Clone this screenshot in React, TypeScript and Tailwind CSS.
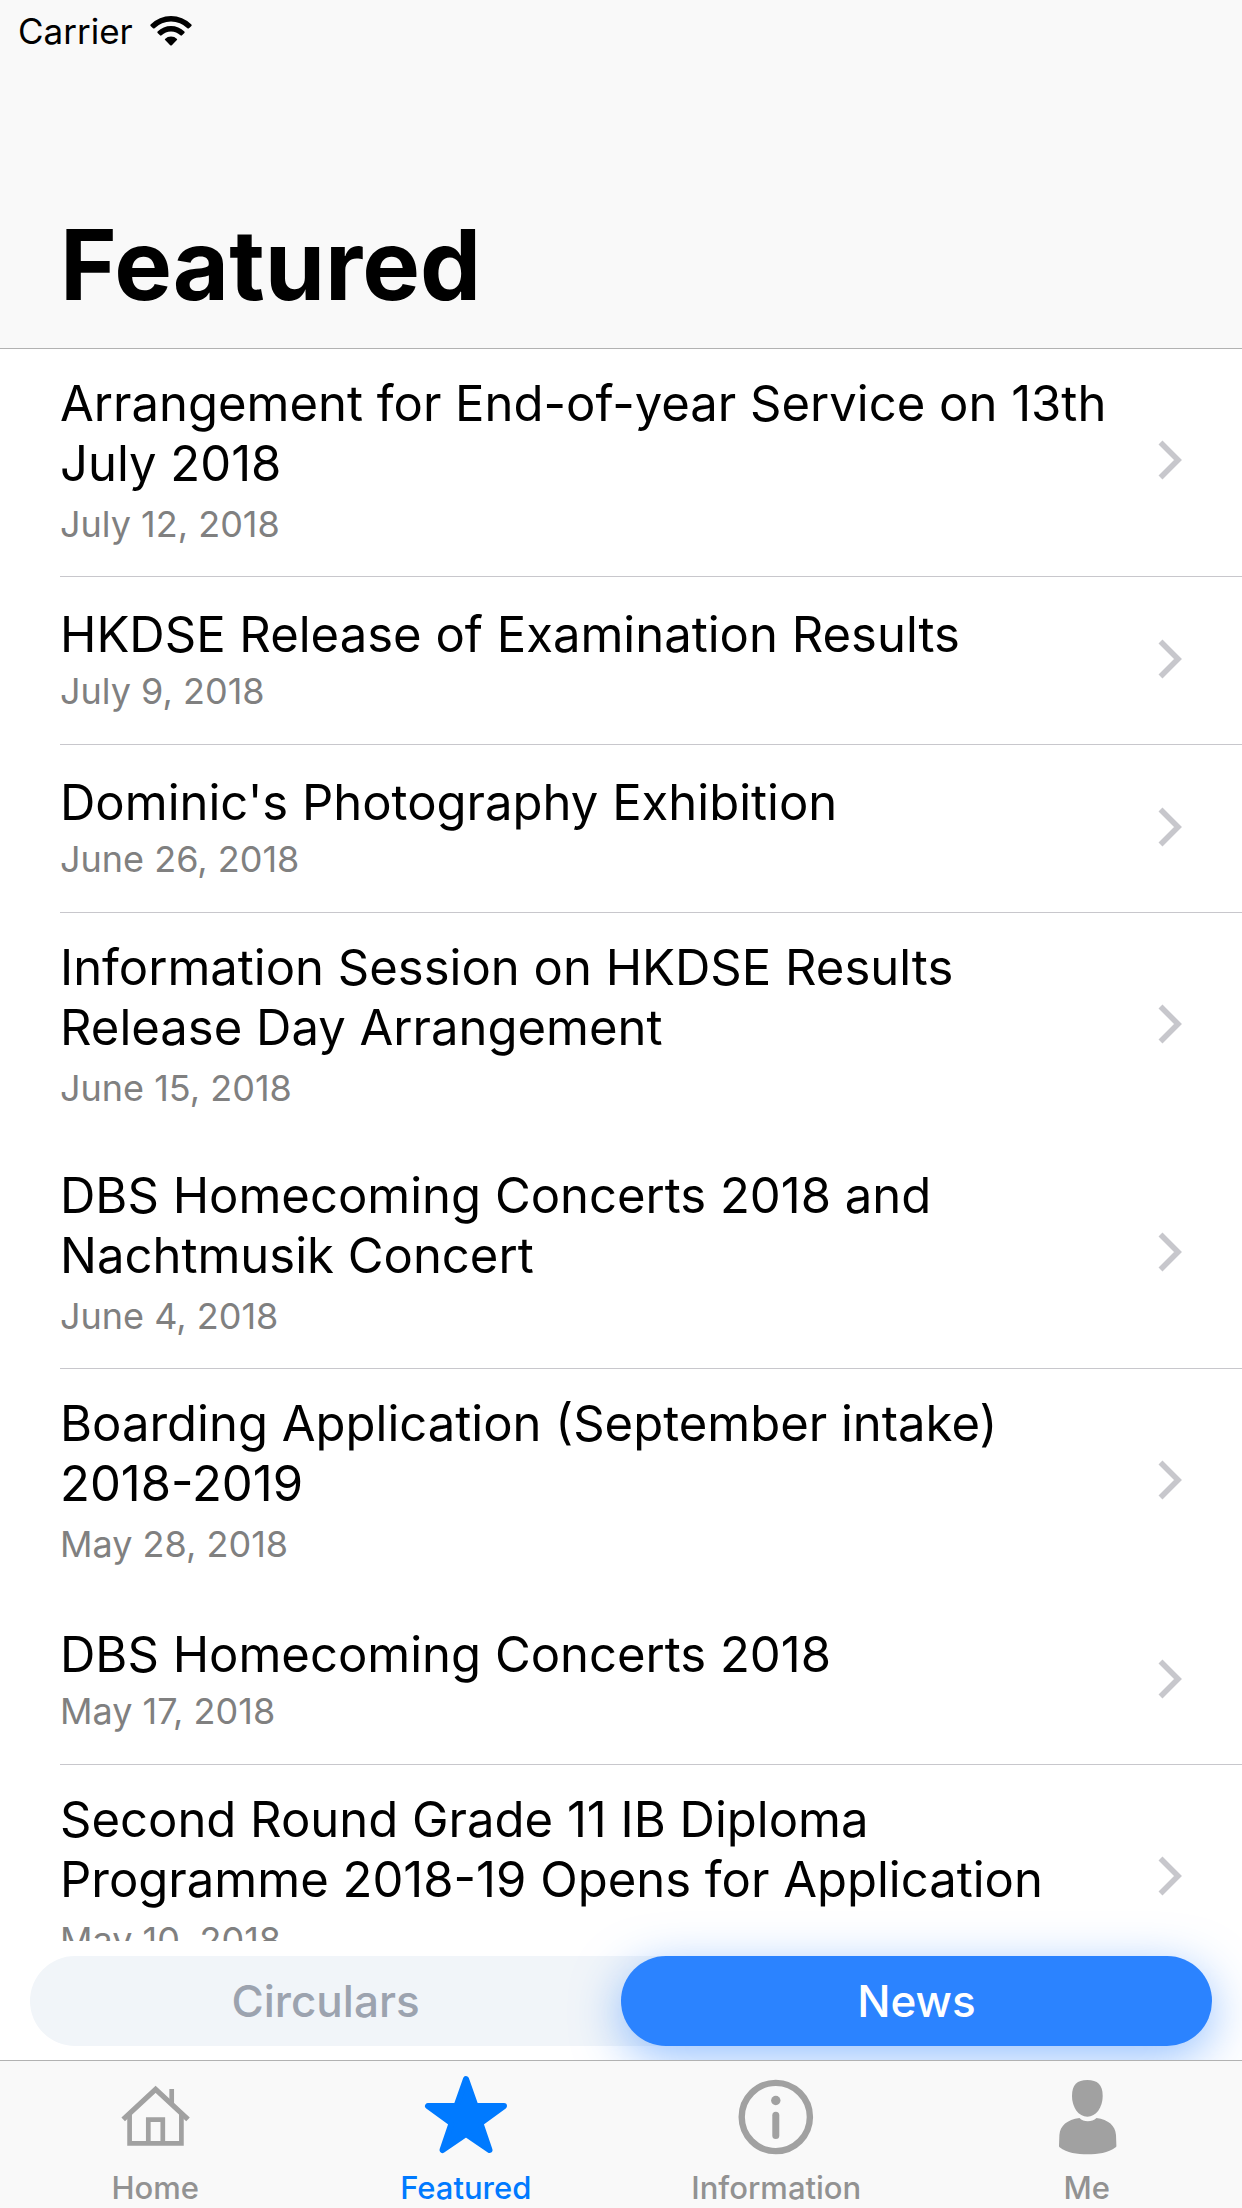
import { useState } from "react";
import type { ReactNode } from "react";

type NewsItem = {
  title: string;
  date: string;
  lines: 1 | 2;
  divider: boolean;
};

const NEWS: NewsItem[] = [
  { title: "Arrangement for End-of-year Service on 13th July 2018", date: "July 12, 2018", lines: 2, divider: true },
  { title: "HKDSE Release of Examination Results", date: "July 9, 2018", lines: 1, divider: true },
  { title: "Dominic's Photography Exhibition", date: "June 26, 2018", lines: 1, divider: true },
  { title: "Information Session on HKDSE Results Release Day Arrangement", date: "June 15, 2018", lines: 2, divider: false },
  { title: "DBS Homecoming Concerts 2018 and Nachtmusik Concert", date: "June 4, 2018", lines: 2, divider: true },
  { title: "Boarding Application (September intake) 2018-2019", date: "May 28, 2018", lines: 2, divider: false },
  { title: "DBS Homecoming Concerts 2018", date: "May 17, 2018", lines: 1, divider: true },
  { title: "Second Round Grade 11 IB Diploma Programme 2018-19 Opens for Application", date: "May 10, 2018", lines: 2, divider: true },
];

function WifiIcon() {
  return (
    <svg viewBox="0 0 42 30" className="h-[30px] w-[42px]" fill="currentColor" aria-hidden="true">
      <path d="M0.6 8.4A29 29 0 0 1 41.4 8.4Q42 9.2 41.4 9.9L39 12.2Q38.2 12.9 37.4 12.2A23.4 23.4 0 0 0 4.6 12.2Q3.8 12.9 3 12.2L0.6 9.9Q0 9.2 0.6 8.4Z" />
      <path d="M7.6 15.6A18.8 18.8 0 0 1 34.4 15.6Q35 16.3 34.4 17L32 19.3Q31.2 20 30.4 19.3A13.4 13.4 0 0 0 11.6 19.3Q10.8 20 10 19.3L7.6 17Q7 16.3 7.6 15.6Z" />
      <path d="M15 22.9A8.6 8.6 0 0 1 27 22.9Q27.4 23.5 26.9 24L21.8 29.2Q21 29.9 20.2 29.2L15.1 24Q14.6 23.5 15 22.9Z" />
    </svg>
  );
}

function Chevron() {
  return (
    <svg viewBox="0 0 24 40" className="h-10 w-6 shrink-0" fill="none" stroke="#c7c7cc" strokeWidth="5.6" aria-hidden="true">
      <path d="M2.5 2.5L20 20L2.5 37.5" />
    </svg>
  );
}

function HomeIcon() {
  return (
    <svg viewBox="0 0 90 90" className="size-[90px]" fill="none" stroke="currentColor" strokeWidth="4.7" aria-hidden="true">
      <path d="M13.2 49.3L45.6 19.3L78 49.3" strokeWidth="5.2" />
      <path d="M19.6 43V73.3H71.4V43" />
      <path d="M61.7 19V35" />
      <path d="M38.3 73.3V49.7H52.8V73.3" />
    </svg>
  );
}

function StarIcon() {
  return (
    <svg viewBox="0 0 90 90" className="size-[90px]" fill="currentColor" stroke="currentColor" strokeWidth="6" strokeLinejoin="round" aria-hidden="true">
      <path d="M45 9L54 34.5Q54.6 36 56 36H83L61 52Q59.5 53.2 60 55L68.5 80L46.5 65Q45 64 43.5 65L21.5 80L30 55Q30.5 53.2 29 52L7 36H34Q35.4 36 36 34.5Z" />
    </svg>
  );
}

function InfoIcon() {
  return (
    <svg viewBox="0 0 90 90" className="size-[90px]" fill="none" stroke="currentColor" aria-hidden="true">
      <circle cx="44.8" cy="47" r="34.1" strokeWidth="6.4" />
      <circle cx="44.8" cy="30.5" r="4.7" fill="currentColor" stroke="none" />
      <path d="M44.8 45.2V65.6" strokeWidth="7" strokeLinecap="round" />
    </svg>
  );
}

function PersonIcon() {
  return (
    <svg viewBox="0 0 90 90" className="size-[90px]" fill="currentColor" aria-hidden="true">
      <path d="M45.3 10C55.5 10 60.7 14.5 60.7 26C60.7 37.5 54 46.7 45.3 46.7C36.6 46.7 30 37.5 30 26C30 14.5 35.1 10 45.3 10Z" />
      <path d="M37.5 48C41.5 52.4 50 52.4 54.5 48C66.5 49.8 73.2 55.5 74 65L74.4 76Q74.4 76.8 73.7 77.3C66 83 56 84.3 45.6 84.3C35 84.3 25 83 17.6 77.3Q17 76.8 17 76L17.4 65C18.2 55.5 25 49.8 37.5 48Z" />
    </svg>
  );
}

const TABS: { label: string; icon: ReactNode }[] = [
  { label: "Home", icon: <HomeIcon /> },
  { label: "Featured", icon: <StarIcon /> },
  { label: "Information", icon: <InfoIcon /> },
  { label: "Me", icon: <PersonIcon /> },
];

function NewsRow({ item }: { item: NewsItem }) {
  return (
    <li className="pl-[60px]">
      <a
        href="#"
        className={`flex items-center justify-between border-b pr-[60px] ${
          item.divider ? "border-[#c8c7cc]" : "border-transparent"
        } ${item.lines === 2 ? "pt-[25px] pb-[30px]" : "pt-7 pb-[31px]"}`}
      >
        <div className={`flex max-w-[1060px] flex-col ${item.lines === 2 ? "gap-2" : "gap-1"}`}>
          <h2 className="text-[49px] leading-[60px] text-black">{item.title}</h2>
          <p className="text-[36px] leading-[44px] text-[#808080]">{item.date}</p>
        </div>
        <Chevron />
      </a>
    </li>
  );
}

export default function App() {
  const [segment, setSegment] = useState("News");
  const [tab, setTab] = useState("Featured");

  return (
    <div className="flex h-screen flex-col overflow-hidden bg-white font-['Inter',sans-serif]">
      <header className="flex shrink-0 flex-col border-b border-[#b2b2b2] bg-[#f9f9f9]">
        <div className="flex h-[62px] items-center gap-[17px] px-[18px] text-black">
          <span className="text-[35px] leading-10">Carrier</span>
          <WifiIcon />
        </div>
        <h1 className="px-[60px] pt-[143px] pb-[23px] text-[97px] leading-[120px] font-bold text-black">Featured</h1>
      </header>

      <main className="min-h-0 flex-1 overflow-hidden">
        <ul>
          {NEWS.map((item) => (
            <NewsRow key={item.title} item={item} />
          ))}
        </ul>
      </main>

      <div className="shrink-0 px-[30px] pt-[15px] pb-[14px]">
        <div className="grid grid-cols-2 rounded-full bg-[#f1f5f9]">
          {["Circulars", "News"].map((name) => (
            <button
              key={name}
              type="button"
              aria-pressed={segment === name}
              onClick={() => setSegment(name)}
              className={`h-[90px] rounded-full text-[44px] font-medium ${
                segment === name
                  ? "bg-[#2b83ff] text-white shadow-[0_12px_48px_rgba(43,131,255,0.5)]"
                  : "text-[#9ca3af]"
              }`}
            >
              {name}
            </button>
          ))}
        </div>
      </div>

      <nav className="relative grid shrink-0 grid-cols-4 border-t border-[#b2b2b2] bg-[#f9f9f9]">
        {TABS.map(({ label, icon }) => (
          <button
            key={label}
            type="button"
            aria-current={tab === label ? "page" : undefined}
            onClick={() => setTab(label)}
            className={`flex flex-col items-center gap-[10px] pt-[9px] ${
              tab === label ? "text-[#007aff]" : "text-[#a1a1a1]"
            }`}
          >
            {icon}
            <span
              className={`pb-[2px] text-[31px] leading-9 font-medium ${
                tab === label ? "text-[#007aff]" : "text-[#929292]"
              }`}
            >
              {label}
            </span>
          </button>
        ))}
      </nav>
    </div>
  );
}
